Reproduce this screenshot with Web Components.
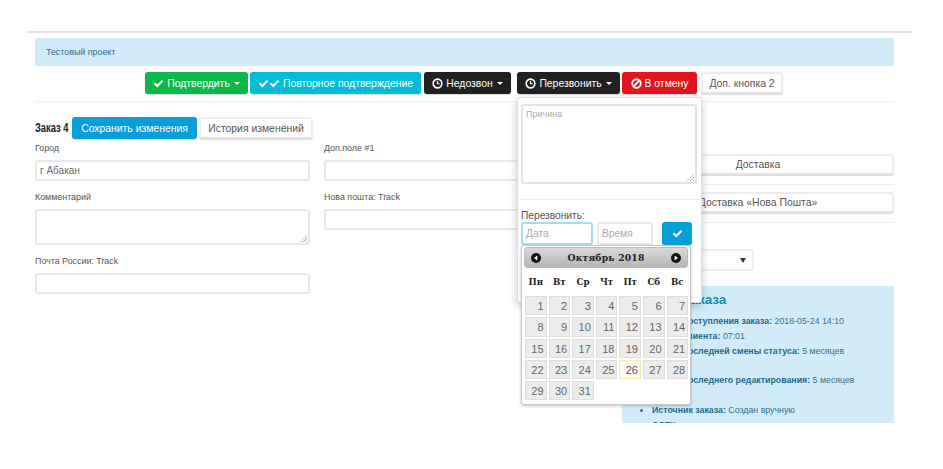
<!DOCTYPE html>
<html lang="ru">
<head>
<meta charset="utf-8">
<title>Заказ 4</title>
<style>
  body { margin: 0; background: #fff; font-family: "Liberation Sans", Arial, sans-serif; }
</style>
</head>
<body>
<order-page></order-page>

<script>
const icons = {
  check: `<svg viewBox="0 0 16 16" width="11" height="11"><path fill="currentColor" d="M1 8.6l2.2-2.2 3 3L12.800 2.800 15 5 6.200 13.800z"/></svg>`,
  clock: `<svg viewBox="0 0 16 16" width="11" height="11"><circle cx="8" cy="8" r="6.300" fill="none" stroke="currentColor" stroke-width="2.400"/><path d="M8 4.200V8.400H11.200" fill="none" stroke="currentColor" stroke-width="1.700"/></svg>`,
  ban: `<svg viewBox="0 0 16 16" width="11" height="11"><circle cx="8" cy="8" r="6.200" fill="none" stroke="currentColor" stroke-width="2.600"/><path d="M3.800 12.200L12.200 3.800" stroke="currentColor" stroke-width="2.600"/></svg>`
};

const btnTemplate = document.createElement('template');
btnTemplate.innerHTML = `
  <style>
    :host {
      display: inline-flex;
      align-items: center;
      justify-content: center;
      gap: 3px;
      height: 22px;
      box-sizing: border-box;
      padding: 0 7px;
      border-radius: 3px;
      font-size: 10.400px;
      white-space: nowrap;
      color: #fff;
      box-shadow: 0 1px 1px rgba(0,0,0,.15);
    }
    :host([color=green]) { background: #0cb84a; }
    :host([color=cyan]) { background: #00bcd9; }
    :host([color=dark]) { background: #212121; }
    :host([color=red]) { background: #e3141c; }
    :host([color=blue]) { background: #069fdc; }
    :host([color=white]) { background: #fff; color: #555; border: 2px solid #eee; border-bottom-color: #e2e2e2; }
    .icons { display: inline-flex; }
    .icons:empty { display: none; }
    .caret {
      display: none;
      margin-left: 1px;
      border: 3px solid transparent;
      border-top-color: currentColor;
      border-bottom: 0;
    }
    :host([caret]) .caret { display: block; }
  </style>
  <span class="icons"></span>
  <slot></slot>
  <span class="caret"></span>
`;

class ActionButton extends HTMLElement {
  constructor() {
    super();
    const root = this.attachShadow({ mode: 'open' });
    root.appendChild(btnTemplate.content.cloneNode(true));
    const names = (this.getAttribute('icon') || '').split(' ').filter(Boolean);
    root.querySelector('.icons').innerHTML = names.map((n) => icons[n]).join('');
  }
}
customElements.define('action-button', ActionButton);

const fieldTemplate = document.createElement('template');
fieldTemplate.innerHTML = `
  <style>
    :host { display: block; margin-bottom: 10px; }
    label { display: block; height: 12px; line-height: 12px; margin-bottom: 6px; font-size: 8.900px; color: #555; }
    .box {
      box-sizing: border-box;
      height: 21px;
      padding: 0 3px;
      border: 2px solid #e8e8e8;
      border-radius: 3px;
      background: #fff;
      font-size: 10px;
      line-height: 17px;
      color: #666;
      position: relative;
    }
    :host([multi]) .box { height: 36px; }
    :host([multi]) .box::after {
      content: '';
      position: absolute;
      right: 1px;
      bottom: 1px;
      width: 7px;
      height: 7px;
      background: repeating-linear-gradient(135deg, transparent 0 1.500px, #999 1.500px 2.500px);
      clip-path: polygon(100% 0, 100% 100%, 0 100%);
    }
  </style>
  <label></label>
  <div class="box"><slot></slot></div>
`;

class FormField extends HTMLElement {
  constructor() {
    super();
    const root = this.attachShadow({ mode: 'open' });
    root.appendChild(fieldTemplate.content.cloneNode(true));
    root.querySelector('label').textContent = this.getAttribute('label');
  }
}
customElements.define('form-field', FormField);

const pickerTemplate = document.createElement('template');
pickerTemplate.innerHTML = `
  <style>
    :host {
      display: block;
      position: absolute;
      left: 3px;
      top: 147px;
      width: 170px;
      height: 160px;
      box-sizing: border-box;
      padding: 1px 2px;
      background: #fff;
      border: 1px solid #c8c8c8;
      border-radius: 3px;
      box-shadow: 0 1px 3px rgba(0,0,0,.25);
    }
    .head {
      display: flex;
      align-items: center;
      justify-content: space-between;
      height: 21px;
      padding: 0 6px;
      border-radius: 3px;
      background: linear-gradient(#d9d9d9, #b5b5b5);
      border: 1px solid #bbb;
      box-sizing: border-box;
      font: bold 9.200px "DejaVu Serif", serif;
      letter-spacing: .2px;
      color: #222;
    }
    .head svg { width: 10px; height: 10px; display: block; }
    .names, .days {
      display: grid;
      grid-template-columns: repeat(7, 21.600px);
      column-gap: 2px;
      margin-left: 1px;
    }
    .names {
      height: 28px;
      text-align: center;
      font: bold 8.700px/28px "DejaVu Serif", serif;
      color: #222;
    }
    .days { grid-auto-rows: 19.300px; row-gap: 2px; }
    .days span {
      box-sizing: border-box;
      padding-right: 2px;
      border: 1px solid #dedede;
      background: #ececec;
      text-align: right;
      font: 11px/18px "Liberation Sans", sans-serif;
      color: #666;
    }
    .days span.today { background: #fffdf2; border-color: #f6ebb8; color: #555; }
  </style>
  <div class="head">
    <svg viewBox="0 0 10 10"><circle cx="5" cy="5" r="5" fill="#111"/><path d="M6.400 2.500v5L3 5z" fill="#fff"/></svg>
    <span>Октябрь 2018</span>
    <svg viewBox="0 0 10 10"><circle cx="5" cy="5" r="5" fill="#111"/><path d="M3.600 2.500v5L7 5z" fill="#fff"/></svg>
  </div>
  <div class="names"></div>
  <div class="days"></div>
`;

class DatePicker extends HTMLElement {
  constructor() {
    super();
    const root = this.attachShadow({ mode: 'open' });
    root.appendChild(pickerTemplate.content.cloneNode(true));
    root.querySelector('.names').innerHTML = ['Пн', 'Вт', 'Ср', 'Чт', 'Пт', 'Сб', 'Вс']
      .map((d) => `<div>${d}</div>`).join('');
    let days = '';
    for (let i = 1; i <= 31; i++) {
      days += `<span class="${i === 26 ? 'today' : ''}">${i}</span>`;
    }
    root.querySelector('.days').innerHTML = days;
  }
}
customElements.define('date-picker', DatePicker);

const menuTemplate = document.createElement('template');
menuTemplate.innerHTML = `
  <style>
    :host {
      display: block;
      position: absolute;
      left: 517px;
      top: 97px;
      width: 185px;
      height: 206px;
      box-sizing: border-box;
      padding: 6px 4px;
      background: #fff;
      border: 1px solid #ddd;
      border-radius: 3px;
      box-shadow: 0 3px 8px rgba(0,0,0,.22);
    }
    .reason {
      box-sizing: border-box;
      height: 80px;
      width: 176px;
      margin-left: -1px;
      padding: 3px 3px;
      border: 2px solid #e4e4e4;
      border-radius: 3px;
      font-size: 9px;
      color: #aaa;
      position: relative;
    }
    .reason::after {
      content: '';
      position: absolute;
      right: 1px;
      bottom: 1px;
      width: 7px;
      height: 7px;
      background: repeating-linear-gradient(135deg, transparent 0 1.500px, #999 1.500px 2.500px);
      clip-path: polygon(100% 0, 100% 100%, 0 100%);
    }
    hr { border: 0; border-top: 1px solid #eee; margin: 15px -3px 9px; }
    .title { height: 13px; line-height: 13px; margin: 0 0 0 -1px; font-size: 10.200px; color: #555; }
    .row { display: flex; align-items: flex-start; margin-left: -1px; }
    .in {
      box-sizing: border-box;
      height: 23px;
      padding: 0 3px;
      border: 2px solid #e8e8e8;
      border-radius: 3px;
      font-size: 10.200px;
      line-height: 19px;
      color: #aaa;
    }
    .date { width: 72px; margin-right: 4px; border-color: #a9dcf0; }
    .time { width: 56px; margin-right: 9px; }
    action-button { width: 30px; height: 23px; padding: 0; }
  </style>
  <div class="reason">Причина</div>
  <hr>
  <div class="title">Перезвонить:</div>
  <div class="row">
    <div class="in date">Дата</div>
    <div class="in time">Время</div>
    <action-button color="blue" icon="check"></action-button>
  </div>
  <date-picker></date-picker>
`;

class CallbackMenu extends HTMLElement {
  constructor() {
    super();
    this.attachShadow({ mode: 'open' }).appendChild(menuTemplate.content.cloneNode(true));
  }
}
customElements.define('callback-menu', CallbackMenu);

const infoTemplate = document.createElement('template');
infoTemplate.innerHTML = `
  <style>
    :host {
      display: block;
      box-sizing: border-box;
      height: 137px;
      padding: 6px 10px 0;
      background: #d1ecf8;
      overflow: hidden;
      color: #31708f;
      font-size: 8.800px;
      line-height: 14.800px;
    }
    h3 { margin: 0 0 6px; font-size: 13.500px; line-height: 16px; color: #0a8fb4; }
    ul { margin: 0; padding: 0 25px 0 20px; }
    b { color: #1f6a8c; }
  </style>
  <h3>Детали заказа</h3>
  <ul>
    <li><b>Время поступления заказа:</b> 2018-05-24 14:10</li>
    <li><b>Время клиента:</b> 07:01</li>
    <li><b>Время последней смены статуса:</b> 5 месяцев назад</li>
    <li><b>Время последнего редактирования:</b> 5 месяцев назад</li>
    <li><b>Источник заказа:</b> Создан вручную</li>
    <li><b>СДЕК трек:</b></li>
  </ul>
`;

class InfoPanel extends HTMLElement {
  constructor() {
    super();
    this.attachShadow({ mode: 'open' }).appendChild(infoTemplate.content.cloneNode(true));
  }
}
customElements.define('info-panel', InfoPanel);

const pageTemplate = document.createElement('template');
pageTemplate.innerHTML = `
  <style>
    :host {
      display: block;
      position: relative;
      height: 469px;
      box-sizing: border-box;
      padding-top: 31px;
    }
    .frame {
      width: 886px;
      height: 392px;
      margin-left: 27px;
      box-sizing: border-box;
      padding: 5px 19px 0 8px;
      border-top: 2px solid #e4e4e4;
      overflow: hidden;
    }
    .alert {
      box-sizing: border-box;
      height: 28px;
      padding: 0 11px;
      background: #d1ecf8;
      border-radius: 2px;
      font-size: 8.900px;
      line-height: 28px;
      color: #31708f;
    }
    .actions { display: flex; margin: 6px 0 0 110px; }
    .actions action-button:nth-child(1) { width: 103px; margin-right: 2px; }
    .actions action-button:nth-child(2) { width: 171px; margin-right: 3px; }
    .actions action-button:nth-child(3) { width: 87px; margin-right: 6px; }
    .actions action-button:nth-child(4) { width: 103px; margin-right: 2px; }
    .actions action-button:nth-child(5) { width: 75px; margin-right: 4px; }
    .actions action-button:nth-child(6) { width: 82px; }
    hr { border: 0; border-top: 1px solid #eee; margin: 0; }
    .actions + hr { margin-top: 7px; }
    .title { display: flex; align-items: center; margin-top: 15px; height: 22px; }
    .title strong { display: block; width: 37px; font-size: 12px; color: #222; white-space: nowrap; transform: scaleX(.78); transform-origin: left; }
    .title action-button:nth-of-type(1) { width: 125px; margin-right: 2px; }
    .title action-button:nth-of-type(2) { width: 114px; }
    .cols { display: flex; margin-top: 3px; }
    .col { width: 275px; flex: none; }
    .col + .col { margin-left: 14px; }
    .side { width: 272px; margin-left: 23px !important; padding-top: 12px; }
    .side action-button { display: flex; width: 100%; height: 21px; }
    .side hr { margin: 9px 0 7px; }
    .side hr.second { margin-bottom: 26px; }
    .select {
      display: flex;
      align-items: center;
      justify-content: flex-end;
      box-sizing: border-box;
      width: 132px;
      height: 22px;
      padding-right: 6px;
      border: 2px solid #eee;
      border-radius: 3px;
      margin-bottom: 15px;
    }
    .select::after {
      content: '';
      border: 3px solid transparent;
      border-top: 5px solid #333;
      border-bottom: 0;
    }
  </style>
  <div class="frame">
    <div class="alert">Тестовый проект</div>
    <div class="actions">
      <action-button color="green" icon="check" caret>Подтвердить</action-button>
      <action-button color="cyan" icon="check check">Повторное подтверждение</action-button>
      <action-button color="dark" icon="clock" caret>Недозвон</action-button>
      <action-button color="dark" icon="clock" caret>Перезвонить</action-button>
      <action-button color="red" icon="ban">В отмену</action-button>
      <action-button color="white">Доп. кнопка 2</action-button>
    </div>
    <hr>
    <div class="title">
      <strong>Заказ 4</strong>
      <action-button color="blue">Сохранить изменения</action-button>
      <action-button color="white">История изменений</action-button>
    </div>
    <div class="cols">
      <div class="col">
        <form-field label="Город">г Абакан</form-field>
        <form-field label="Комментарий" multi></form-field>
        <form-field label="Почта России: Track"></form-field>
      </div>
      <div class="col">
        <form-field label="Доп.поле #1"></form-field>
        <form-field label="Нова пошта: Track"></form-field>
      </div>
      <div class="col side">
        <action-button color="white">Доставка</action-button>
        <hr>
        <action-button color="white">Доставка «Нова Пошта»</action-button>
        <hr class="second">
        <div class="select"></div>
        <info-panel></info-panel>
      </div>
    </div>
  </div>
  <callback-menu></callback-menu>
`;

class OrderPage extends HTMLElement {
  constructor() {
    super();
    this.attachShadow({ mode: 'open' }).appendChild(pageTemplate.content.cloneNode(true));
  }
}
customElements.define('order-page', OrderPage);
</script>
</body>
</html>
